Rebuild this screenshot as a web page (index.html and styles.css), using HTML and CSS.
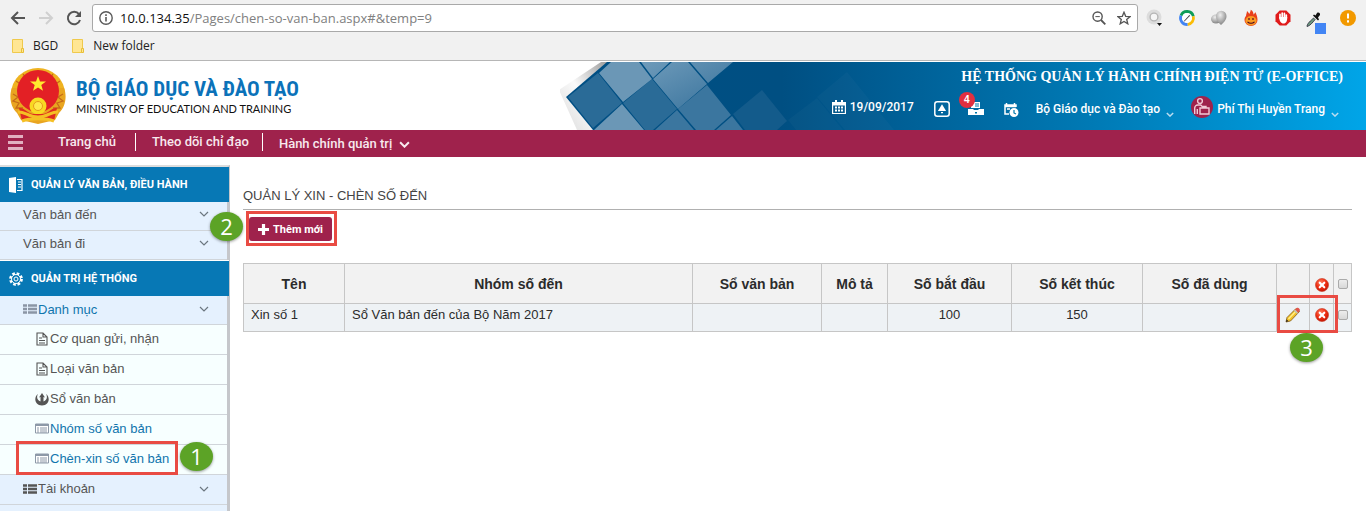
FILE: index.html
```html
<!DOCTYPE html>
<html lang="vi">
<head>
<meta charset="utf-8">
<title>Chèn số văn bản</title>
<link rel="stylesheet" href="styles.css">
</head>
<body>
<svg class="defs" width="0" height="0" aria-hidden="true">
  <defs>
    <radialGradient id="red" cx=".4" cy=".3" r=".8"><stop offset="0" stop-color="#ff7b5c"/><stop offset=".5" stop-color="#ee2e12"/><stop offset="1" stop-color="#b80f00"/></radialGradient>
    <radialGradient id="grey" cx=".4" cy=".3" r=".7"><stop offset="0" stop-color="#eee"/><stop offset="1" stop-color="#858585"/></radialGradient>
  </defs>
  <symbol id="chev" viewBox="0 0 10 6"><path d="M1 1l4 4 4-4" fill="none" stroke="currentColor" stroke-width="1.2"/></symbol>
  <symbol id="chev-bold" viewBox="0 0 10 6"><path d="M1 1l4 4 4-4" fill="none" stroke="currentColor" stroke-width="1.8"/></symbol>
  <symbol id="doc" viewBox="0 0 12 14"><path d="M1 1h6l4 4v8H1zM7 1v4h4M3 6h3M3 8.5h6M3 11h6" fill="none" stroke="currentColor" stroke-width="1.1"/></symbol>
  <symbol id="card" viewBox="0 0 14 11"><path d="M.5 1h13v9H.5z" fill="#fff" stroke="#8d99a8"/><path d="M1 1h12v2H1z" fill="#8d99a8"/><path d="M2 5h2M2 7h2M2 9h2M5 5h7M5 7h7M5 9h7" stroke="#8d99a8"/></symbol>
  <symbol id="list" viewBox="0 0 14 10"><path d="M0 1.5h4M5 1.5h9M0 5h4M5 5h9M0 8.5h4M5 8.5h9" stroke="currentColor" stroke-width="2.6"/></symbol>
  <symbol id="del" viewBox="0 0 14 14"><circle cx="7" cy="7" r="6.5" fill="url(#red)" stroke="#c5331d" stroke-width=".6"/><path d="M4.7 4.7l4.6 4.6M9.3 4.7L4.7 9.3" stroke="#fff" stroke-width="2.1" stroke-linecap="round"/></symbol>
  <symbol id="folder" viewBox="0 0 12 14"><path d="M.5.5h10v13H.5z" fill="#ffe693" stroke="#efc94c"/><path d="M9.5 9.5h2v4h-2z" fill="#ffe693" stroke="#e8bf38"/></symbol>
</svg>

<div class="chrome">
  <div class="toolbar">
    <button class="tool" aria-label="Back"><svg width="16" height="16" viewBox="0 0 16 16"><path d="M15 8H2M8 2L2 8l6 6" fill="none" stroke="#555" stroke-width="2"/></svg></button>
    <button class="tool" aria-label="Forward"><svg width="16" height="16" viewBox="0 0 16 16"><path d="M1 8h13M8 2l6 6-6 6" fill="none" stroke="#d0d0d0" stroke-width="2"/></svg></button>
    <button class="tool" aria-label="Reload"><svg width="16" height="16" viewBox="0 0 16 16"><path d="M13 4.2A6.2 6.2 0 1 0 14 10" fill="none" stroke="#555" stroke-width="2"/><path d="M15 1v6H9z" fill="#555"/></svg></button>
    <div class="omnibox">
      <svg width="14" height="14" viewBox="0 0 14 14"><circle cx="7" cy="7" r="6.2" fill="none" stroke="#5a5a5a" stroke-width="1.4"/><path d="M7 6v4.5M7 3.3V5" stroke="#5a5a5a" stroke-width="1.6"/></svg>
      <div class="url">10.0.134.35<span>/Pages/chen-so-van-ban.aspx#&amp;temp=9</span></div>
      <svg width="14" height="14" viewBox="0 0 14 14"><circle cx="5.6" cy="5.6" r="4.6" fill="none" stroke="#555" stroke-width="1.4"/><path d="M9 9l4.3 4.3" stroke="#555" stroke-width="1.8"/><path d="M3.4 5.6h4.4" stroke="#555"/></svg>
      <svg width="14" height="14" viewBox="0 0 14 14"><path d="M7 1.2l1.7 4.1 4.4.3-3.4 2.9 1.1 4.3L7 10.4l-3.8 2.4 1.1-4.3L.9 5.6l4.4-.3z" fill="none" stroke="#555" stroke-width="1.3"/></svg>
    </div>
    <div class="extensions">
      <svg width="18" height="18" viewBox="0 0 18 18"><circle cx="8" cy="8" r="7.5" fill="#dcdcdc"/><circle cx="8" cy="8" r="3.9" fill="#f6f6f6" stroke="#b5b5b5" stroke-width="1.4"/><path d="M11 14h5l-2.5 3z" fill="#111"/></svg>
      <svg width="18" height="18" viewBox="0 0 18 18"><g fill="none" stroke-width="3"><path d="M3.1 6.6A6.4 6.4 0 0 1 15.2 7.3" stroke="#0f9d58"/><path d="M15.2 7.3A6.4 6.4 0 0 1 9.5 15.4" stroke="#fbbc05"/><path d="M9.5 15.4A6.4 6.4 0 0 1 3.1 6.6" stroke="#4285f4"/></g><circle cx="9" cy="9" r="5" fill="#fff"/><path d="M5.500 12.500l5.500-6 1.500-1-1 1.700-4.800 5z" fill="#333"/></svg>
      <svg width="18" height="18" viewBox="0 0 18 18"><ellipse cx="6" cy="10" rx="5" ry="4.5" fill="url(#grey)"/><path d="M11 16c-3-3-5-5-5-9a5 5 0 0 1 10.500 0c0 4-2.500 6-5.500 9z" fill="url(#grey)"/></svg>
      <svg width="18" height="18" viewBox="0 0 18 18"><path d="M4 7c0-2 1-3 1-5 1 1 2 2 2.200 3C8 4 8.500 2.500 8.800.8 11 2 11.500 4 11.500 5.500c1-.7 1.500-1.500 1.700-2.500C14.500 5 15.500 8 15.500 11a6.500 6 0 0 1-13 0C2.500 9 3 8 4 7z" fill="#e9401c"/><ellipse cx="9" cy="11.800" rx="5.600" ry="4.700" fill="#fa9a22"/><path d="M7 9v2M11 9v2M5.500 12.800c2 2 5 2 7 0" fill="none" stroke="#402" stroke-width="1.1"/></svg>
      <svg width="18" height="18" viewBox="0 0 18 18"><path d="M5.700 1.500h6.600l4.200 4.200v6.600l-4.200 4.200H5.700l-4.200-4.200V5.700z" fill="#e01b1b"/><path d="M6 9V5.300M8.200 8.500V4M10.400 8.500V4.300M12.300 9V6" stroke="#fff" stroke-width="1.7" stroke-linecap="round"/><path d="M5.200 8h8c.2 4-1 6.500-3.800 6.500-2.400 0-4.200-2.500-4.200-6.500z" fill="#fff"/></svg>
      <svg class="picker" width="20" height="23" viewBox="0 0 20 23"><path d="M1 15.500c0-3 4-6 6.500-8.500l1.600 1.600C6.500 11.500 4 15 1 15.500z" fill="#6d9a80" stroke="#223" stroke-width=".8"/><path d="M7 4.500l5 5 1-1L12 6.500 14 4c.5-2-1.500-3-3-2L9.500 4.500 8 3.500z" fill="#111"/><path d="M9 12h11v11H9z" fill="#4285f4"/></svg>
      <svg width="16" height="16" viewBox="0 0 16 16"><circle cx="8" cy="8" r="8" fill="#f29900"/><path d="M8 3.500v5M8 10.200v2.200" stroke="#fff" stroke-width="2"/></svg>
    </div>
  </div>
  <div class="bookmarks">
    <a href="#"><svg width="12" height="14"><use href="#folder"/></svg>BGD</a>
    <a href="#"><svg width="12" height="14"><use href="#folder"/></svg>New folder</a>
  </div>
</div>

<header class="banner">
  <svg class="art" width="806" height="68" viewBox="0 0 806 68" aria-hidden="true">
    <defs>
      <linearGradient id="sky" x1="0" x2="1" y1="0" y2="0"><stop offset="0" stop-color="#004f84"/><stop offset=".27" stop-color="#004f82"/><stop offset=".38" stop-color="#005b91"/><stop offset=".66" stop-color="#007ab5"/><stop offset="1" stop-color="#00a5e8"/></linearGradient>
      <linearGradient id="tile" x1="0" x2="1" y1="0" y2="1"><stop offset="0" stop-color="#6f9bba"/><stop offset="1" stop-color="#36719b"/></linearGradient>
      <linearGradient id="edge" x1="0" x2="1" y1="1" y2="0"><stop offset="0" stop-color="#dadada"/><stop offset=".5" stop-color="#fafafa"/><stop offset="1" stop-color="#999"/></linearGradient>
    </defs>
    <path d="M-1 28L41 0h8L8 35l27 33H17z" fill="url(#edge)"/>
    <path d="M6 35L47 0h759v68H33z" fill="url(#sky)"/>
    <path d="M8 35l30-24 24 30-29 25zM92 17l25 30-24 21h-8L63 41z" fill="#2a6b97"/>
    <path d="M39 11L51 0h28l13 17-29 23zM62 42l22 26H34z" fill="#6b97b6"/>
    <path d="M81 0h29L93 16zM112 0h16l19 22-29 25-25-30zM130 0h63l-45 21z" fill="none"/>
    <path d="M81 0h29L93 16zM112 0h16l19 22-29 25-25-30zM130 0h43l-25 21z" fill="url(#tile)"/>
    <path d="M147 23l24 30-17 15h-18l-18-21zM117 48l17 20H95zM172 54l11 14h-27z" fill="#3b769f"/>
    <path d="M173 52l29-24 25 31-10 9h-32z" fill="#135b8b"/>
    <path d="M228 58l29-22 26 32h-47zM257 35l30-25 47 58h-49z" fill="#ffffff" opacity=".025"/>
  </svg>
  <div class="brand">
    <svg width="58" height="58" viewBox="0 0 58 58" aria-hidden="true">
      <ellipse cx="28" cy="27" rx="27" ry="26" fill="#efb321"/>
      <path d="M2 21c-3 7-2 19 5 25l4 7 17 4 17-4 4-7c7-6 8-18 5-25z" fill="#e9a520"/>
      <path d="M3 27l5 3-5 4 6 2-3 5 7 0M53 27l-5 3 5 4-6 2 3 5-7 0M6 14l6 4M50 14l-6 4M13 7l4 5M43 7l-4 5" fill="none" stroke="#c66b18" stroke-width="1.300"/>
      <ellipse cx="28" cy="24" rx="21" ry="21" fill="#e32025"/>
      <path d="M28 9l2 5.500h6l-4.700 3.600 1.700 5.700-5-3.400-5 3.400 1.700-5.700L20 14.500h6z" fill="#ffeb2e"/>
      <circle cx="28" cy="39" r="8.500" fill="#f8d922"/><circle cx="28" cy="39" r="4.500" fill="#ffe94b" stroke="#e59b1c"/>
      <path d="M9 41c5-1 8 5 14 6h10c6-1 9-7 14-6l-3 13c-6-2-10-1-16-1s-10-1-16 1z" fill="#df2b20"/>
      <path d="M8 45c6-1 10 5 20 5s14-6 20-5M12 54c8-3 24-3 32 0" fill="none" stroke="#f5c024" stroke-width="3"/>
    </svg>
    <div class="brand-text"><strong>BỘ GIÁO DỤC VÀ ĐÀO TẠO</strong><span>MINISTRY OF EDUCATION AND TRAINING</span></div>
  </div>
  <div class="account">
    <h1>HỆ THỐNG QUẢN LÝ HÀNH CHÍNH ĐIỆN TỬ (E-OFFICE)</h1>
    <div class="status">
      <span class="date"><svg width="14" height="14" viewBox="0 0 14 14"><path d="M.6 2.500h12.800v11H.6zM.6 5h12.800" fill="none" stroke="#fff" stroke-width="1.200"/><path d="M1 2h12v3H1zM3 0h2v3H3zM9 0h2v3H9z" fill="#fff"/><path d="M3 7.500h2M6 7.500h2M9 7.500h2M3 10.500h2M6 10.500h2M9 10.500h2" stroke="#fff" stroke-width="1.800"/></svg>19/09/2017</span>
      <button class="icon-btn" aria-label="Thông báo"><svg width="16" height="16" viewBox="0 0 16 16"><rect x=".8" y=".8" width="14.400" height="14.400" rx="2.500" fill="none" stroke="#fff" stroke-width="1.500"/><path d="M8 3.200l3.200 5.300.9 1.500H3.900l.9-1.500zM7 11h2v1.300H7z" fill="#fff"/></svg></button>
      <button class="icon-btn inbox" aria-label="Hộp thư"><svg width="16" height="16" viewBox="0 0 16 16"><path d="M3 1h9v6H3z" fill="#fff"/><path d="M7 3h4M7 5h4" stroke="#07a"/><path d="M0 8h5l1 1h4l1-1h5v6H0z" fill="#fff"/><path d="M7 11h2v1.500H7z" fill="#07a"/></svg><span class="badge">4</span></button>
      <button class="icon-btn" aria-label="Lịch"><svg width="15" height="15" viewBox="0 0 15 15"><path d="M5 12H1V3h11v2M1 4.500h11" fill="none" stroke="#fff" stroke-width="1.500"/><path d="M2.500 1v3M10.500 1v3M3 7h3" stroke="#fff" stroke-width="1.500"/><circle cx="10" cy="10.500" r="4.500" fill="#fff"/><path d="M10 8v3l2 1" fill="none" stroke="#07a" stroke-width="1.200"/></svg></button>
      <a class="org" href="#">Bộ Giáo dục và Đào tạo <svg width="8" height="5"><use href="#chev-bold"/></svg></a>
      <a class="user" href="#"><svg class="avatar" width="22" height="22" viewBox="0 0 22 22"><circle cx="11" cy="11" r="11" fill="#9f224c"/><g fill="none" stroke="#f1c9d6" stroke-width="1.400"><circle cx="9" cy="5" r="2.400"/><path d="M3.700 18v-6a3 3 0 0 1 3-3h3l3 3M6.300 18v-5M9 12h9v6H9zM12 12v-1.500h3V12"/></g></svg>Phí Thị Huyền Trang <svg width="8" height="5"><use href="#chev-bold"/></svg></a>
    </div>
  </div>
</header>

<nav class="menu">
  <button class="burger" aria-label="Menu"><i></i><i></i><i></i></button>
  <a href="#">Trang chủ</a>
  <a href="#">Theo dõi chỉ đạo</a>
  <a class="sub" href="#">Hành chính quản trị <svg width="11" height="7"><use href="#chev-bold"/></svg></a>
</nav>

<div class="page">
  <aside class="side">
    <h2><svg width="14" height="16" viewBox="0 0 14 16"><path d="M0 1l7-1v16l-7-1z" fill="#fff"/><path d="M8 2.500h5v11H8M9 5h3M9 7.500h3M9 10h3" fill="none" stroke="#fff" stroke-width="1.200"/></svg>QUẢN LÝ VĂN BẢN, ĐIỀU HÀNH</h2>
    <a class="l1" href="#">Văn bản đến<svg class="go" width="10" height="6"><use href="#chev"/></svg></a>
    <a class="l1" href="#">Văn bản đi<svg class="go" width="10" height="6"><use href="#chev"/></svg></a>
    <h2 class="second"><svg width="14" height="14" viewBox="0 0 14 14"><circle cx="7" cy="7" r="5.600" fill="none" stroke="#fff" stroke-width="2.600" stroke-dasharray="2.600 1.800"/><circle cx="7" cy="7" r="4.500" fill="none" stroke="#fff"/><circle cx="7" cy="7" r="2" fill="none" stroke="#fff"/></svg>QUẢN TRỊ HỆ THỐNG</h2>
    <a class="l1 on grey" href="#"><svg width="14" height="10"><use href="#list"/></svg>Danh mục<svg class="go" width="10" height="6"><use href="#chev"/></svg></a>
    <a class="l2" href="#"><svg width="14" height="14"><use href="#doc"/></svg>Cơ quan gửi, nhận</a>
    <a class="l2" href="#"><svg width="14" height="14"><use href="#doc"/></svg>Loại văn bản</a>
    <a class="l2" href="#"><svg width="14" height="14" viewBox="0 0 14 14"><path d="M3 2C-1.500 5-.5 13.500 7 13.500S15.500 5 11 2c2 3.500.5 6.500-2.500 7.500V5l1.500.5L7 1 4 5.500 5.500 5v4.500C2.500 8.500 1 5.500 3 2z" fill="#555"/></svg>Sổ văn bản</a>
    <a class="l2 on" href="#"><svg width="14" height="11"><use href="#card"/></svg>Nhóm số văn bản</a>
    <a class="l2 on" href="#"><svg width="14" height="11"><use href="#card"/></svg>Chèn-xin số văn bản</a>
    <a class="l1 tall" href="#"><svg width="14" height="10"><use href="#list"/></svg>Tài khoản<svg class="go" width="10" height="6"><use href="#chev"/></svg></a>
    <a class="l1" href="#">Quyền sử dụng</a>
    <span class="frame step-one"></span><span class="pin pin-one">1</span>
  </aside>

  <main class="content">
    <h3>QUẢN LÝ XIN - CHÈN SỐ ĐẾN</h3>
    <div class="actions"><button class="add"><svg width="11" height="11" viewBox="0 0 11 11"><path d="M5.500 0v11M0 5.500h11" stroke="#fff" stroke-width="3.200"/></svg>Thêm mới</button><span class="frame step-two"></span><span class="pin pin-two">2</span></div>
    <table>
      <colgroup><col class="c-name"><col><col class="c-doc"><col class="c-desc"><col class="c-from"><col class="c-to"><col class="c-used"><col class="c-edit"><col class="c-del"><col class="c-check"></colgroup>
      <thead><tr><th>Tên</th><th>Nhóm số đến</th><th>Sổ văn bản</th><th>Mô tả</th><th>Số bắt đầu</th><th>Số kết thúc</th><th>Số đã dùng</th><th></th><th><button class="icon-btn" aria-label="Xóa mục đã chọn"><svg width="14" height="14"><use href="#del"/></svg></button></th><th><input type="checkbox" aria-label="Chọn tất cả"></th></tr></thead>
      <tbody><tr><td>Xin số 1</td><td>Sổ Văn bản đến của Bộ Năm 2017</td><td></td><td></td><td class="mid">100</td><td class="mid">150</td><td></td>
        <td class="mid"><button class="icon-btn" aria-label="Sửa"><svg width="16" height="16" viewBox="0 0 16 16"><path d="M1 15l1-4.500L11 1.500l3.500 3L5.500 14z" fill="#f3c22b" stroke="#7c5516" stroke-width=".8"/><path d="M3.500 12L12 3" stroke="#fff08a" stroke-width="1.300"/><path d="M10 2.600L12 .8c1-.7 3.500 1.500 2.800 2.700L13.200 5.800z" fill="#e2544c"/><path d="M9.400 3.200l3.200 3.200" stroke="#b8bcc8" stroke-width="1.300"/><path d="M1 15l.6-2.400L3.400 14z" fill="#222"/></svg></button></td>
        <td class="mid"><button class="icon-btn" aria-label="Xóa"><svg width="14" height="14"><use href="#del"/></svg></button></td><td class="mid"><input type="checkbox" aria-label="Chọn Xin số 1"></td></tr></tbody>
    </table>
    <span class="frame step-three"></span><span class="pin pin-three">3</span>
  </main>
</div>
</body>
</html>
```
FILE: styles.css
```css
* { box-sizing: border-box; }
body { margin: 0; background: #fff; color: #333; font: 13px "Liberation Sans", Arial, sans-serif; overflow: hidden; }
svg { flex: none; }
.defs { position: absolute; }
a { color: inherit; text-decoration: none; }
button { font: inherit; color: inherit; background: none; border: 0; padding: 0; cursor: pointer; }
h1, h2, h3 { margin: 0; }

/* browser bar */
.chrome { background: #f1f1f1; border-bottom: 1px solid #b6b6b6; height: 61px; font-family: "Open Sans", sans-serif; color: #222; }
.toolbar { display: flex; align-items: center; padding: 4px 10px 0 10px; gap: 12px; }
.tool { display: flex; }
.omnibox { flex: 1; display: flex; align-items: center; gap: 11px; height: 28px; padding: 0 6px; background: #fff; border: 1px solid #a9a9a9; border-radius: 3px; margin: 0 -4px 0 -2px; }
.url { flex: 1; font-size: 13px; margin-left: -4px; color: #111; }
.url span { color: #808080; }
.extensions { display: flex; align-items: center; gap: 14px; height: 28px; }
.picker { margin-top: 8px; }
.bookmarks { display: flex; gap: 14px; padding: 5px 12px 0; font-size: 12px; line-height: 18px; }
.bookmarks a { display: flex; align-items: center; gap: 9px; }

/* site header */
.banner { position: relative; display: flex; justify-content: space-between; height: 69px; padding-top: 1px; }
.art { position: absolute; right: 0; top: 1px; overflow: hidden; }
.brand { display: flex; gap: 8px; padding: 5px 0 0 10px; }
.brand-text { display: flex; flex-direction: column; padding-top: 10px; }
.brand-text strong { font: bold 21px/24px "Liberation Sans Narrow", "Roboto Condensed", Roboto, sans-serif; color: #0b72b9; }
.brand-text span { font: 11px/16px Lato, sans-serif; color: #111; }
.account { position: relative; color: #fff; padding: 6px 23px 0 0; }
.account h1 { font: bold 14px/18px "Liberation Serif", serif; text-align: right; }
.status { display: flex; align-items: center; justify-content: flex-end; height: 34px; padding-top: 12px; margin-right: 4px; font: 500 12px/16px Roboto, sans-serif; }
.date { display: flex; gap: 4px; align-items: center; margin-right: 20px; padding-bottom: 4px; }
.icon-btn { display: inline-flex; position: relative; vertical-align: middle; }
.inbox { margin: 0 20px 0 18px; }
.badge { position: absolute; left: -9px; top: -9px; width: 16px; height: 16px; border-radius: 50%; background: #e12f3f; font: bold 10px/16px "Liberation Sans", sans-serif; text-align: center; }
.org, .user { display: flex; align-items: center; }
.org { margin: 0 17px; }
.org svg, .user svg:last-child { margin: 10px 0 0 6px; color: #b9dcf0; }
.user .avatar { margin: -4px 4px 0 0; }

/* main menu */
.menu { display: flex; align-items: center; height: 27px; background: #9f224c; color: #f8e9ee; font: 500 13px/18px Roboto, sans-serif; padding: 0 8px 3px; }
.menu a { padding: 0 13px 0 16px; }
.menu a + a { border-left: 1px solid #fff; }
.menu .burger + a { padding: 0 19px 0 17px; margin-left: 18px; }
.menu .sub { line-height: 14px; padding: 4px 16px 0; }
.sub svg { margin-left: 4px; }
.burger { display: grid; gap: 3px; width: 15px; }
.burger i { height: 3px; background: #e2b0c1; }

.page { display: flex; align-items: flex-start; }

/* sidebar */
.side { position: relative; flex: none; width: 230px; margin-top: 8px; border-top: 2px solid #ddd; border-right: 3px solid #c5c7cb; color: #555; }
.side h2 { display: flex; align-items: center; gap: 8px; height: 35px; margin-right: -2px; padding-left: 9px; background: #0778b5; color: #fff; font: bold 11px/14px Roboto, sans-serif; }
.side .second { border-top: 1px solid #fff; height: 36px; }
.side a { display: flex; align-items: center; gap: 1px; border-bottom: 1px solid #d0d5da; }
.side .l1 { height: 29px; padding: 0 18px 4px 23px; background: #e5f1fe; }
.side .go { margin-left: auto; color: #6c7780; }
.side .l2 { height: 30px; padding: 0 0 2px 35px; background: #f7ffff; }
.side .on { color: #1075ad; }
.grey svg:first-child { color: #8b95a5; }
.side .grey { height: 29px; padding-bottom: 2px; }
.side .tall { height: 30px; padding-bottom: 2px; }

/* content */
.content { position: relative; flex: 1; padding: 31px 14px 0 13px; }
.content h3 { font: 13px/16px "Liberation Sans", sans-serif; color: #444; border-bottom: 1px solid #b0b0b0; padding-bottom: 5px; }
.actions { position: relative; display: flex; padding: 7px 0 22px 6px; }
.add { display: flex; align-items: center; gap: 4px; height: 24px; padding: 0 9px; border-radius: 3px; background: #9f224c; color: #fff; font: bold 11px Roboto, sans-serif; }
table { width: 100%; border-collapse: collapse; table-layout: fixed; color: #2b2b2b; }
th, td { border: 1px solid #c6c6c6; padding: 0 7px; }
th { height: 40px; background: #f2f2f2; font-size: 14px; padding: 0; }
td { height: 28px; padding-bottom: 6px; background: #eef2f5; white-space: nowrap; }
td.mid { text-align: center; padding: 0 0 6px; }
.c-name { width: 101px; } .c-doc { width: 129px; } .c-desc { width: 66px; } .c-from { width: 124px; } .c-to { width: 131px; }
.c-used { width: 134px; } .c-edit { width: 33px; } .c-del { width: 24px; } .c-check { width: 18px; }
input[type="checkbox"] { appearance: none; display: block; width: 10px; height: 10px; margin: 0 auto; border: 1px solid #aaa; border-radius: 2px; background: linear-gradient(#ededed, #d8d8d8); }

/* tutorial callouts lying over the page */
.frame { position: absolute; border: 3px solid #e94b43; pointer-events: none; }
.pin { position: absolute; width: 33px; height: 29px; border-radius: 50%; background: #5ca326; color: #fff; font: 22px/28px "Open Sans", sans-serif; text-align: center; box-shadow: 0 1px 3px #0006; }
.step-one { left: 16px; top: 274px; width: 162px; height: 34px; }
.pin-one { left: 180px; top: 275px; }
.step-two { left: 3px; top: 1px; width: 91px; height: 35px; }
.pin-two { left: -33px; top: 2px; }
.step-three { right: 28px; top: 138px; width: 61px; height: 38px; }
.pin-three { right: 43px; top: 176px; }
```
